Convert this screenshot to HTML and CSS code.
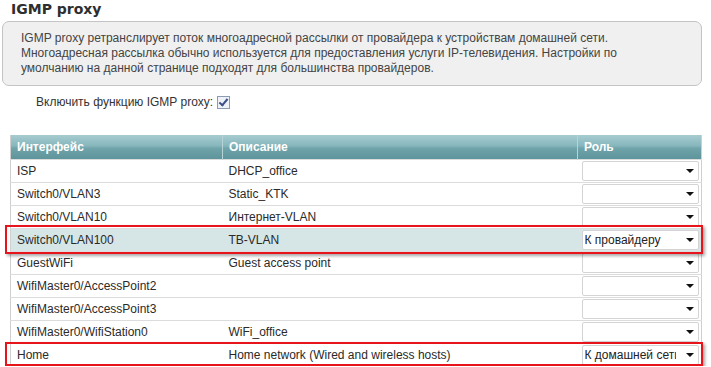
FILE: index.html
```html
<!DOCTYPE html>
<html lang="ru">
<head>
    <meta charset="UTF-8">
    <title>IGMP proxy</title>
    <link rel="stylesheet" href="styles.css">
</head>
<body>
    <div class="page">
        <h1>IGMP proxy</h1>
        <div class="info">
            IGMP proxy ретранслирует поток многоадресной рассылки от провайдера к устройствам домашней сети.<br>
            Многоадресная рассылка обычно используется для предоставления услуги IP-телевидения. Настройки по<br>
            умолчанию на данной странице подходят для большинства провайдеров.
        </div>
        <div class="enable">
            <span>Включить функцию IGMP proxy:</span>
            <span class="check"></span>
        </div>
        <div class="table-wrap">
            <table class="ifaces">
                <thead>
                    <tr>
                        <th class="c-if">Интерфейс</th>
                        <th class="c-desc">Описание</th>
                        <th class="c-role">Роль</th>
                    </tr>
                </thead>
                <tbody>
                    <tr><td>ISP</td><td>DHCP_office</td><td><div class="sel"></div></td></tr>
                    <tr><td>Switch0/VLAN3</td><td>Static_KTK</td><td><div class="sel"></div></td></tr>
                    <tr><td>Switch0/VLAN10</td><td>Интернет-VLAN</td><td><div class="sel"></div></td></tr>
                    <tr class="active"><td>Switch0/VLAN100</td><td>TB-VLAN</td><td><div class="sel"><span>К провайдеру</span></div></td></tr>
                    <tr><td>GuestWiFi</td><td>Guest access point</td><td><div class="sel"></div></td></tr>
                    <tr><td>WifiMaster0/AccessPoint2</td><td></td><td><div class="sel"></div></td></tr>
                    <tr><td>WifiMaster0/AccessPoint3</td><td></td><td><div class="sel"></div></td></tr>
                    <tr><td>WifiMaster0/WifiStation0</td><td>WiFi_office</td><td><div class="sel"></div></td></tr>
                    <tr><td>Home</td><td>Home network (Wired and wireless hosts)</td><td><div class="sel"><span>К домашней сети</span></div></td></tr>
                </tbody>
            </table>
            <div class="mark mark-wan"></div>
            <div class="mark mark-home"></div>
        </div>
    </div>
</body>
</html>
```

FILE: styles.css
```css
body {
    margin: 0;
    font-family: "Liberation Sans", Arial, sans-serif;
    font-size: 12px;
    color: #333;
    background: #fff;
    overflow: hidden;
}
.page {
    padding: 1px 0 0 2px;
    width: 700px;
}
h1 {
    font-family: "DejaVu Sans", Verdana, sans-serif;
    font-size: 14px;
    font-weight: bold;
    color: #2e2e2e;
    margin: 0 0 0 9px;
    line-height: 17px;
}
.info {
    margin-top: 3px;
    background: #f0f0f0;
    border: 1px solid #c4c4c4;
    border-radius: 7px;
    padding: 9px 18px 9px 18px;
    line-height: 15px;
    color: #444;
}
.enable {
    display: flex;
    align-items: center;
    gap: 4px;
    margin: 9px 0 0 34px;
    height: 14px;
    color: #333;
}
.check {
    width: 11px;
    height: 11px;
    border: 1px solid #8a9bb5;
    background: #eef1f6;
    position: relative;
}
.check::after {
    content: "";
    position: absolute;
    left: 3px;
    top: 0px;
    width: 3px;
    height: 7px;
    border: solid #3a4f8a;
    border-width: 0 2px 2px 0;
    transform: rotate(40deg);
}
.table-wrap {
    position: relative;
    margin: 26px 0 0 8px;
    width: 692px;
}
.ifaces {
    width: 692px;
    border-collapse: collapse;
    table-layout: fixed;
    border-left: 1px solid #cfcfcf;
    border-right: 1px solid #cfcfcf;
}
.ifaces th {
    height: 24px;
    padding: 0 0 0 6px;
    text-align: left;
    color: #fff;
    font-weight: bold;
    background: linear-gradient(#a6ccd0, #86b6bc 45%, #6fa3aa 55%, #5e949b);
    border-left: 1px solid #b6d4d7;
}
.ifaces th:first-child {
    border-left: none;
}
.c-if { width: 205px; }
.c-desc { width: 348px; }
.ifaces td {
    height: 22px;
    padding: 0 0 0 6px;
    border-top: 1px solid #dcdcdc;
    white-space: nowrap;
    overflow: hidden;
    color: #2a2a2a;
}
.ifaces td:last-child {
    padding-left: 4px;
}
.ifaces tr.active td {
    background: #d6e5e5;
}
.sel {
    position: relative;
    width: 113px;
    height: 18px;
    line-height: 18px;
    border: 1px solid #d4d4d4;
    border-radius: 2px;
    background: #fff;
    padding-left: 2px;
    overflow: hidden;
    color: #222;
}
.sel span {
    display: block;
    width: 91px;
    overflow: hidden;
    white-space: nowrap;
}
.sel::after {
    content: "";
    position: absolute;
    right: 4px;
    top: 7px;
    border-left: 4px solid transparent;
    border-right: 4px solid transparent;
    border-top: 4px solid #111;
}
.mark {
    position: absolute;
    left: -5px;
    width: 694px;
    border: 2px solid #e8141c;
    box-shadow: 2px 2px 3px rgba(0, 0, 0, 0.35);
    pointer-events: none;
}
.mark-wan {
    top: 90px;
    height: 25px;
}
.mark-home {
    top: 207px;
    height: 20px;
}
```
